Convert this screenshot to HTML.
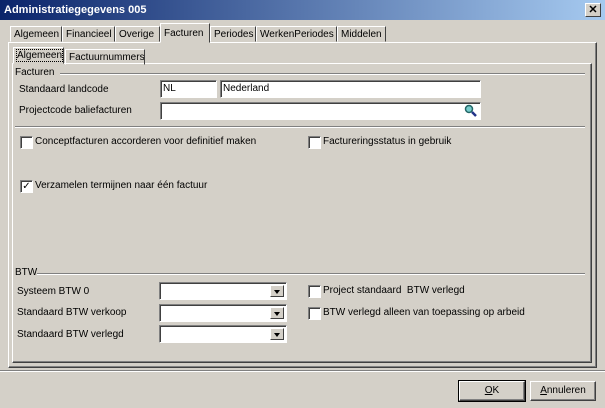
<!DOCTYPE html><html><head><style>
body{margin:0;width:605px;height:408px;background:#d4d0c8;font:10px "Liberation Sans",sans-serif;color:#000;position:relative;overflow:hidden}
.a{position:absolute;white-space:nowrap}
.title{left:0;top:0;width:605px;height:20px;background:linear-gradient(90deg,#0a246a,#a6caf0);color:#fff;font-weight:bold;font-size:11px;line-height:20px}
.out{border:1px solid;border-color:#fff #404040 #404040 #fff;box-shadow:inset -1px -1px #808080}
.tab{position:absolute;top:26px;height:16px;border:1px solid;border-color:#fff #404040 #d4d0c8 #fff;line-height:15px;padding:0 3px;box-sizing:border-box;white-space:nowrap;overflow:hidden}
.in{background:#fff;border:1px solid;border-color:#808080 #fff #fff #808080;box-shadow:inset 1px 1px #404040;box-sizing:border-box;height:18px;line-height:16px;padding-left:2px}
.cb{width:11px;height:11px;background:#fff;border:1px solid;border-color:#808080 #fff #fff #808080;box-shadow:inset 1px 1px #404040}
.dd{position:absolute;right:2px;top:2px;width:14px;height:12px;background:#d4d0c8;border:1px solid;border-color:#fff #404040 #404040 #fff;box-sizing:border-box}
.dd:after{content:"";position:absolute;left:3px;top:4px;border:3px solid transparent;border-top:4px solid #000;border-bottom:0}
.line{height:0;border-top:1px solid #808080;border-bottom:1px solid #fff}
.btn{height:20px;box-sizing:border-box;text-align:center;line-height:18px;border:1px solid;border-color:#fff #404040 #404040 #fff;box-shadow:inset -1px -1px #808080}
</style></head><body>
<div class="a title"><span style="padding-left:4px">Administratiegegevens 005</span>
<div class="a" style="right:4px;top:3px;width:16px;height:14px;background:#d4d0c8;border:1px solid;border-color:#fff #404040 #404040 #fff;box-sizing:border-box;color:#000;font-size:11px;line-height:12px;text-align:center">✕</div></div>
<div class="a out" style="left:8px;top:42px;width:587px;height:324px"></div>
<div class="tab" style="left:10px;width:52px">Algemeen</div>
<div class="tab" style="left:62px;width:53px">Financieel</div>
<div class="tab" style="left:115px;width:45px">Overige</div>
<div class="tab" style="left:160px;top:23px;height:20px;width:50px;background:#d4d0c8;line-height:20px">Facturen</div>
<div class="tab" style="left:210px;width:46px">Periodes</div>
<div class="tab" style="left:256px;width:81px">WerkenPeriodes</div>
<div class="tab" style="left:337px;width:49px">Middelen</div>
<div class="a out" style="left:12px;top:63px;width:578px;height:298px"></div>
<div class="tab" style="left:13px;top:47px;height:17px;width:51px;background:#d4d0c8"><span style="outline:1px dotted #000">Algemeen</span></div>
<div class="tab" style="left:65px;top:49px;width:80px">Factuurnummers</div>
<div class="a" style="left:15px;top:67px">Facturen</div>
<div class="a line" style="left:60px;top:73px;width:525px"></div>
<div class="a" style="left:19px;top:84px">Standaard landcode</div>
<div class="a in" style="left:160px;top:80px;width:57px">NL</div>
<div class="a in" style="left:220px;top:80px;width:261px">Nederland</div>
<div class="a" style="left:19px;top:105px">Projectcode baliefacturen</div>
<div class="a in" style="left:160px;top:102px;width:321px"><svg class="a" style="right:2px;top:1px" width="14" height="14"><circle cx="5" cy="5" r="3.5" fill="#7cc" stroke="#266" stroke-width="1.5"/><path d="M8 8l4 4" stroke="#238" stroke-width="2.5"/></svg></div>
<div class="a line" style="left:15px;top:126px;width:570px"></div>
<div class="a cb" style="left:20px;top:136px"></div><div class="a" style="left:35px;top:136px">Conceptfacturen accorderen voor definitief maken</div>
<div class="a cb" style="left:308px;top:136px"></div><div class="a" style="left:323px;top:136px">Factureringsstatus in gebruik</div>
<div class="a cb" style="left:20px;top:180px;font-size:10px;line-height:11px;text-align:center">✓</div><div class="a" style="left:35px;top:180px">Verzamelen termijnen naar één factuur</div>
<div class="a" style="left:15px;top:267px">BTW</div>
<div class="a line" style="left:37px;top:273px;width:548px"></div>
<div class="a" style="left:17px;top:286px">Systeem BTW 0</div>
<div class="a" style="left:17px;top:307px">Standaard BTW verkoop</div>
<div class="a" style="left:17px;top:329px">Standaard BTW verlegd</div>
<div class="a in" style="left:159px;top:282px;width:128px;height:18px"><div class="dd"></div></div>
<div class="a in" style="left:159px;top:304px;width:128px;height:18px"><div class="dd"></div></div>
<div class="a in" style="left:159px;top:325px;width:128px;height:18px"><div class="dd"></div></div>
<div class="a cb" style="left:308px;top:285px"></div><div class="a" style="left:323px;top:285px">Project standaard &nbsp;BTW verlegd</div>
<div class="a cb" style="left:308px;top:307px"></div><div class="a" style="left:323px;top:307px">BTW verlegd alleen van toepassing op arbeid</div>
<div class="a line" style="left:0;top:370px;width:605px"></div>
<div class="a btn" style="left:459px;top:381px;width:66px;outline:1px solid #000"><u>O</u>K</div>
<div class="a btn" style="left:530px;top:381px;width:66px"><u>A</u>nnuleren</div>
</body></html>
